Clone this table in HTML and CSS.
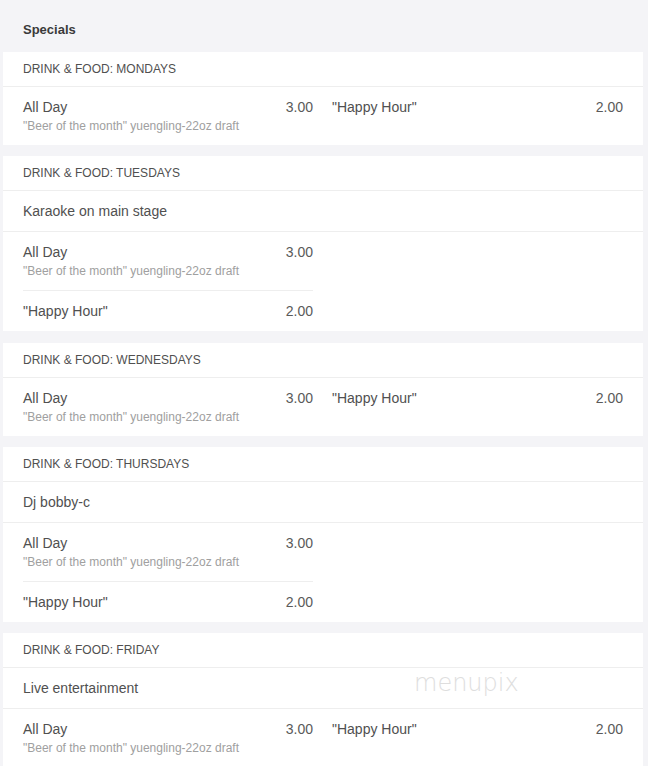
FILE: index.html
```html
<!DOCTYPE html>
<html>
<head>
<meta charset="utf-8">
<link rel="stylesheet" href="styles.css">
</head>
<body>
<div class="page">
  <h1 class="page-title">Specials</h1>

  <section class="card">
    <div class="card-title">DRINK &amp; FOOD: MONDAYS</div>
    <div class="items two">
      <div class="item">
        <div class="item-row"><span class="name">All Day</span><span class="price">3.00</span></div>
        <div class="desc">"Beer of the month" yuengling-22oz draft</div>
      </div>
      <div class="item">
        <div class="item-row"><span class="name">"Happy Hour"</span><span class="price">2.00</span></div>
      </div>
    </div>
  </section>

  <section class="card tall">
    <div class="card-title">DRINK &amp; FOOD: TUESDAYS</div>
    <div class="note">Karaoke on main stage</div>
    <div class="items one">
      <div class="item sep">
        <div class="item-row"><span class="name">All Day</span><span class="price">3.00</span></div>
        <div class="desc">"Beer of the month" yuengling-22oz draft</div>
      </div>
      <div class="item">
        <div class="item-row"><span class="name">"Happy Hour"</span><span class="price">2.00</span></div>
      </div>
    </div>
  </section>

  <section class="card">
    <div class="card-title">DRINK &amp; FOOD: WEDNESDAYS</div>
    <div class="items two">
      <div class="item">
        <div class="item-row"><span class="name">All Day</span><span class="price">3.00</span></div>
        <div class="desc">"Beer of the month" yuengling-22oz draft</div>
      </div>
      <div class="item">
        <div class="item-row"><span class="name">"Happy Hour"</span><span class="price">2.00</span></div>
      </div>
    </div>
  </section>

  <section class="card">
    <div class="card-title">DRINK &amp; FOOD: THURSDAYS</div>
    <div class="note">Dj bobby-c</div>
    <div class="items one">
      <div class="item sep">
        <div class="item-row"><span class="name">All Day</span><span class="price">3.00</span></div>
        <div class="desc">"Beer of the month" yuengling-22oz draft</div>
      </div>
      <div class="item">
        <div class="item-row"><span class="name">"Happy Hour"</span><span class="price">2.00</span></div>
      </div>
    </div>
  </section>

  <section class="card">
    <div class="card-title">DRINK &amp; FOOD: FRIDAY</div>
    <div class="note">Live entertainment</div>
    <div class="items two">
      <div class="item">
        <div class="item-row"><span class="name">All Day</span><span class="price">3.00</span></div>
        <div class="desc">"Beer of the month" yuengling-22oz draft</div>
      </div>
      <div class="item">
        <div class="item-row"><span class="name">"Happy Hour"</span><span class="price">2.00</span></div>
      </div>
    </div>
  </section>

  <div class="watermark">menupix</div>
</div>
</body>
</html>
```

FILE: styles.css
```css
* { box-sizing: border-box; }
html, body {
  margin: 0;
  padding: 0;
  background: #f4f4f7;
  font-family: "Liberation Sans", Arial, sans-serif;
  color: #555;
}
.page {
  position: relative;
  padding: 0 5px 0 3px;
}
.page-title {
  margin: 0;
  padding: 21px 20px 0;
  height: 52px;
  font-size: 13px;
  line-height: 18px;
  font-weight: bold;
  color: #3a3a3a;
}
.card {
  background: #fff;
  margin-bottom: 11px;
}
.card.tall {
  margin-bottom: 12px;
}
.card-title {
  font-size: 12px;
  line-height: 16px;
  padding: 9px 20px;
  color: #505050;
  border-bottom: 1px solid #eeeeee;
}
.note {
  font-size: 14px;
  line-height: 20px;
  padding: 10px 20px;
  color: #505050;
  border-bottom: 1px solid #eeeeee;
}
.items {
  display: grid;
  padding: 0 20px;
  column-gap: 19px;
}
.items.two { grid-template-columns: 290px 1fr; }
.items.one { grid-template-columns: 290px; }
.item {
  padding: 10px 0;
}
.item.sep {
  border-bottom: 1px solid #eeeeee;
}
.item-row {
  display: flex;
  justify-content: space-between;
  font-size: 14px;
  line-height: 20px;
}
.name { color: #505050; }
.price { color: #5a5a5a; }
.desc {
  font-size: 12px;
  line-height: 18px;
  color: #a0a0a0;
}
.watermark {
  position: absolute;
  left: 414px;
  top: 669px;
  font-family: "DejaVu Sans", sans-serif;
  font-size: 24px;
  font-weight: 200;
  color: #dedede;
}
```
